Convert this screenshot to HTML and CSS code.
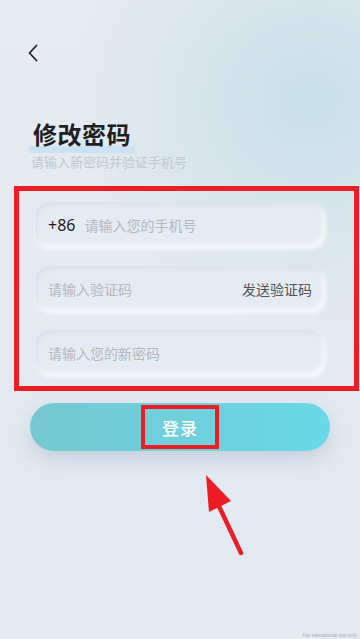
FILE: index.html
```html
<!DOCTYPE html>
<html lang="zh">
<head>
<meta charset="utf-8">
<title>修改密码</title>
<link rel="stylesheet" href="styles.css">
</head>
<body>
<div class="screen">
  <div class="back">
    <svg width="12" height="18" viewBox="0 0 12 18"><path d="M9.5 1.5 L2.5 9 L9.5 16.5" fill="none" stroke="#222" stroke-width="1.8" stroke-linecap="round" stroke-linejoin="round"/></svg>
  </div>
  <h1 class="title"><span class="title-text">修改密码</span></h1>
  <p class="subtitle">请输入新密码并验证手机号</p>
  <div class="form-box">
    <div class="field">
      <span class="prefix">+86</span>
      <span class="placeholder">请输入您的手机号</span>
    </div>
    <div class="field field-split">
      <span class="placeholder">请输入验证码</span>
      <span class="send">发送验证码</span>
    </div>
    <div class="field">
      <span class="placeholder">请输入您的新密码</span>
    </div>
  </div>
  <div class="btn-wrap">
    <div class="login-btn"><span class="login-label">登录</span></div>
  </div>
  <svg class="arrow" width="60" height="100" viewBox="0 0 60 100">
    <line x1="46" y1="87" x2="22" y2="36" stroke="#ee1c25" stroke-width="4.5" stroke-linecap="round"/>
    <polygon points="11,9 14,46 36,35" fill="#ee1c25"/>
  </svg>
  <div class="watermark">For educational use only</div>
</div>
</body>
</html>
```

FILE: styles.css
```css
html, body {
  margin: 0;
  padding: 0;
}
body {
  font-family: "Noto Sans CJK SC", "Noto Sans", sans-serif;
}
.screen {
  position: relative;
  width: 360px;
  height: 639px;
  overflow: hidden;
  background:
    radial-gradient(ellipse 240px 230px at 310px 100px, rgba(198, 224, 231, 0.95), rgba(210, 228, 235, 0) 100%),
    linear-gradient(180deg, #e6ebf1 0%, #e3e9f0 60%, #e3eaf1 100%);
}
.back {
  margin: 44px 0 0 27px;
  height: 18px;
  line-height: 0;
}
.title {
  margin: 57px 0 0 29px;
  font-size: 24px;
  line-height: 30px;
  font-weight: 700;
  color: #1e1f21;
  letter-spacing: 0.5px;
}
.title-text {
  display: inline-block;
  padding: 0 4px;
  height: 34px;
  background: linear-gradient(180deg, transparent 27px, #cbe1f4 27px, #cbe1f4 34px);
}
.subtitle {
  margin: 0 0 0 31px;
  font-size: 13px;
  line-height: 18px;
  color: #c2c8ce;
}
.form-box {
  margin: 15px 0 0 14px;
  width: 319px;
  border: 5px solid #ee1c25;
  padding: 11px 0 10px 16px;
  display: flex;
  flex-direction: column;
  gap: 18px;
}
.field {
  width: 290px;
  height: 46px;
  box-sizing: border-box;
  border-radius: 15px;
  background: #e5ebf2;
  box-shadow:
    inset 2px 3px 5px rgba(170, 185, 205, 0.22),
    inset -2px -3px 5px rgba(255, 255, 255, 0.75),
    1px 2px 4px rgba(255, 255, 255, 0.6);
  display: flex;
  align-items: center;
  padding: 0 13px;
  gap: 9px;
}
.field-split {
  justify-content: space-between;
}
.prefix {
  font-family: "Noto Sans", "Noto Sans CJK SC", sans-serif;
  font-size: 16px;
  color: #1e1f21;
}
.placeholder {
  font-size: 14px;
  color: #b3b8be;
}
.send {
  font-size: 14px;
  color: #505357;
}
.btn-wrap {
  margin: 12px 0 0 30px;
}
.login-btn {
  width: 300px;
  height: 48px;
  border-radius: 24px;
  background: linear-gradient(90deg, #76c8d0 0%, #6fd0dc 50%, #69d9e7 100%);
  box-shadow: 0 9px 18px rgba(125, 150, 180, 0.28);
  display: flex;
  align-items: center;
  justify-content: center;
}
.login-label {
  box-sizing: border-box;
  width: 78px;
  height: 44px;
  border: 4px solid #ee1c25;
  color: #fff;
  font-size: 17px;
  font-weight: 500;
  letter-spacing: 1px;
  display: flex;
  align-items: center;
  justify-content: center;
}
.arrow {
  position: absolute;
  left: 195px;
  top: 466px;
}
.watermark {
  position: absolute;
  right: 3px;
  bottom: 1px;
  font-family: "Liberation Sans", sans-serif;
  font-size: 5px;
  color: #a8adb3;
}
```
